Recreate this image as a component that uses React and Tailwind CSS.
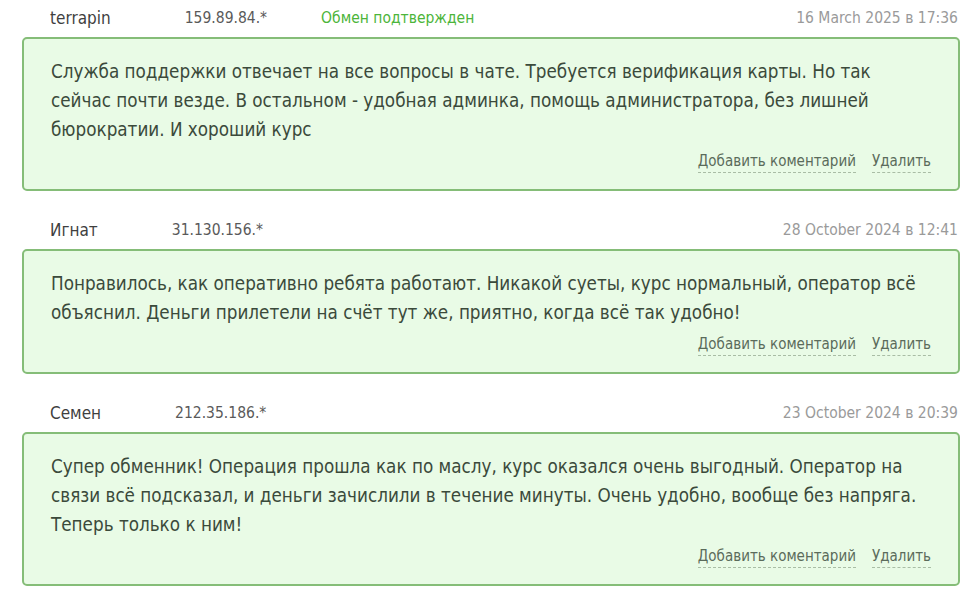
import React from "react";

const reviews = [
  {
    name: "terrapin",
    ip: "159.89.84.*",
    status: "Обмен подтвержден",
    date: "16 March 2025 в 17:36",
    text: "Служба поддержки отвечает на все вопросы в чате. Требуется верификация карты. Но так сейчас почти везде. В остальном - удобная админка, помощь администратора, без лишней бюрократии. И хороший курс",
  },
  {
    name: "Игнат",
    ip: "31.130.156.*",
    date: "28 October 2024 в 12:41",
    text: "Понравилось, как оперативно ребята работают. Никакой суеты, курс нормальный, оператор всё объяснил. Деньги прилетели на счёт тут же, приятно, когда всё так удобно!",
  },
  {
    name: "Семен",
    ip: "212.35.186.*",
    date: "23 October 2024 в 20:39",
    text: "Супер обменник! Операция прошла как по маслу, курс оказался очень выгодный. Оператор на связи всё подсказал, и деньги зачислили в течение минуты. Очень удобно, вообще без напряга. Теперь только к ним!",
  },
];

const Review = ({ review }) => (
  <div className="mb-[29px]">
    {/* header row */}
    <div className="flex items-center h-[21px] pl-[50px] pr-[16px] leading-[21px]">
      <span className="text-[17px] text-[#3f3f3f] mr-[74px]">{review.name}</span>
      <span className="text-[15.5px] text-[#5a5a5a]">{review.ip}</span>
      {review.status && (
        <span className="ml-[54px] text-[15.5px] text-[#4cb53a]">{review.status}</span>
      )}
      <span className="ml-auto text-[15.5px] text-[#9a9a9a]">{review.date}</span>
    </div>

    {/* card */}
    <div className="mt-[8px] ml-[22px] mr-[14px] rounded-[5px] border-2 border-[#85bd78] bg-[#e9fbe6] pl-[27px] pr-[27px] pt-[18px] pb-[16px]">
      <p className="pr-[4px] text-[18.7px] leading-[29px] text-[#3b4a3b]">{review.text}</p>
      <div className="flex justify-end gap-[16px] mt-[6px] text-[15px] leading-[22px] text-[#5b6b5b]">
        <a className="border-b border-dashed border-[#a9bda5] cursor-pointer">Добавить коментарий</a>
        <a className="border-b border-dashed border-[#a9bda5] cursor-pointer">Удалить</a>
      </div>
    </div>
  </div>
);

export default function App() {
  return (
    <div
      className="w-[974px] h-[608px] bg-white overflow-hidden pt-[8px]"
      style={{ fontFamily: '"DejaVu Sans Condensed", "Liberation Sans", sans-serif' }}
    >
      {reviews.map((r) => (
        <Review key={r.ip} review={r} />
      ))}
    </div>
  );
}
